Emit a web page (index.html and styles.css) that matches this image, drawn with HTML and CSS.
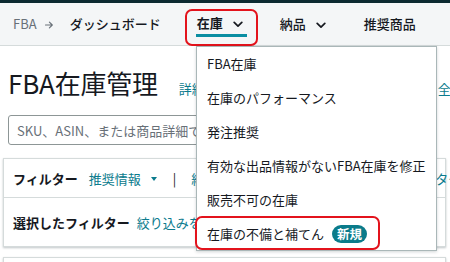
FILE: index.html
```
<!DOCTYPE html>
<html lang="ja">
<head>
<meta charset="utf-8">
<link rel="stylesheet" href="styles.css">
</head>
<body>
<div class="topbar"></div>
<nav class="nav">
  <span class="crumb">FBA</span>
  <svg class="crumb-arrow" width="8" height="8" viewBox="0 0 8 8"><path d="M0.5 4 H7.3 M4.4 1.1 L7.3 4 L4.4 6.9" fill="none" stroke="#687078" stroke-width="1.1" stroke-linecap="round" stroke-linejoin="round"/></svg>
  <span class="nav-link dash">ダッシュボード</span>
  <span class="nav-item active">
    <span class="nav-text">在庫</span>
    <svg class="chev" width="10" height="7" viewBox="0 0 10 7"><path d="M1.2 1.4 L5 5.2 L8.8 1.4" fill="none" stroke="#16191f" stroke-width="1.7" stroke-linecap="round" stroke-linejoin="round"/></svg>
  </span>
  <span class="nav-item plain">
    <span class="nav-text">納品</span>
    <svg class="chev" width="10" height="7" viewBox="0 0 10 7"><path d="M1.2 1.4 L5 5.2 L8.8 1.4" fill="none" stroke="#16191f" stroke-width="1.7" stroke-linecap="round" stroke-linejoin="round"/></svg>
  </span>
  <span class="nav-item plain rec">
    <span class="nav-text">推奨商品</span>
  </span>
</nav>

<main class="page">
  <div class="title-row">
    <h1 class="title">FBA在庫管理</h1>
    <span class="learn link">詳細はこちら</span>
    <span class="all link">全在庫を表示</span>
  </div>

  <div class="search">
    <span class="placeholder">SKU、ASIN、または商品詳細で検索</span>
  </div>

  <section class="card">
    <div class="card-row filter-row">
      <span class="label">フィルター</span>
      <span class="link rec-info">推奨情報</span>
      <span class="caret"></span>
      <span class="pipe">|</span>
      <span class="link narrow">絞り込み</span>
      <span class="link far">ターゲット</span>
    </div>
    <div class="card-row selected-row">
      <span class="label">選択したフィルター</span>
      <span class="link sel">絞り込みを選択してください</span>
    </div>
  </section>

  <section class="card card2">
    <div class="field"></div>
  </section>
</main>

<div class="dropdown">
  <div class="dd-item">FBA在庫</div>
  <div class="dd-item">在庫のパフォーマンス</div>
  <div class="dd-item">発注推奨</div>
  <div class="dd-item">有効な出品情報がないFBA在庫を修正</div>
  <div class="dd-item">販売不可の在庫</div>
  <div class="dd-item marked">在庫の不備と補てん<span class="badge">新規</span></div>
</div>
</body>
</html>
```

FILE: styles.css
```
html, body {
  margin: 0;
  padding: 0;
  width: 450px;
  height: 262px;
  overflow: hidden;
  background: #ffffff;
}
body {
  position: relative;
  font-family: "Noto Sans CJK JP", "Noto Sans", sans-serif;
  font-size: 13px;
  color: #16191f;
  white-space: nowrap;
}

.topbar {
  height: 3px;
  background: #0c2a31;
}

.nav {
  display: flex;
  align-items: center;
  height: 42px;
  padding-left: 13px;
  background: #f4f6f7;
  border-bottom: 1px solid #d5dbdb;
  line-height: 18px;
}
.crumb {
  color: #687078;
  font-size: 13px;
}
.crumb-arrow {
  margin-left: 8px;
  margin-top: 1px;
}
.nav-link.dash {
  margin-left: 17px;
  font-weight: 500;
}
.nav-item {
  display: flex;
  align-items: center;
  gap: 10px;
  font-weight: 500;
}
.nav-item.active {
  position: relative;
  align-self: flex-start;
  margin-top: 8px;
  height: 23px;
  margin-left: 35px;
  padding: 0 4px 0 1px;
  border-bottom: 3px solid #0a8ea2;
  font-weight: 700;
}
.nav-item.active::after {
  content: "";
  position: absolute;
  left: -11px;
  top: -2px;
  width: 69px;
  height: 33px;
  border: 2px solid #e3131c;
  border-radius: 7px;
}
.nav-item.plain {
  margin-left: 33px;
}
.nav-item.rec {
  margin-left: 38px;
}
.chev {
  margin-top: 3px;
}

.title-row {
  display: flex;
  align-items: baseline;
  margin-top: 20px;
  padding-left: 8px;
  height: 34px;
}
.title {
  margin: 0;
  font-size: 26px;
  font-weight: 400;
  line-height: 34px;
  color: #16191f;
  letter-spacing: -0.2px;
}
.link {
  color: #0b7b8d;
}
.learn {
  flex: 0 0 259px;
  margin-left: 21px;
  overflow: hidden;
}

.search {
  display: flex;
  align-items: center;
  box-sizing: border-box;
  margin: 15px 0 0 8px;
  width: 340px;
  height: 30px;
  padding-left: 8px;
  border: 1px solid #8d9696;
  border-radius: 3px;
}
.placeholder {
  color: #687078;
}

.card {
  margin: 13px 4px 0 3px;
  border: 1px solid #d5dbdb;
  box-shadow: 0 1px 2px rgba(0, 28, 36, 0.25);
  background: #fff;
}
.card-row {
  display: flex;
  align-items: center;
  padding-left: 9px;
}
.filter-row {
  height: 38px;
  border-bottom: 1px solid #d5dbdb;
}
.selected-row {
  height: 48px;
}
.label {
  font-weight: 700;
}
.rec-info {
  margin-left: 11px;
}
.caret {
  flex: 0 0 auto;
  width: 0;
  height: 0;
  margin-left: 10px;
  margin-top: 2px;
  border-left: 3.5px solid transparent;
  border-right: 3.5px solid transparent;
  border-top: 4px solid #0b7b8d;
}
.pipe {
  margin-left: 16px;
  color: #16191f;
}
.narrow {
  margin-left: 15px;
  flex: 0 0 244px;
  overflow: hidden;
}
.sel {
  margin-left: 7px;
}
.card2 {
  margin-top: 10px;
  height: 40px;
}
.field {
  margin: 4px 0 0 213px;
  width: 163px;
  height: 20px;
  border: 1px solid #879596;
  border-radius: 2px;
}

.dropdown {
  position: absolute;
  left: 196px;
  top: 46px;
  width: 241px;
  box-sizing: border-box;
  background: #fff;
  border: 1px solid #aab7b8;
  box-shadow: 0 1px 3px rgba(0, 28, 36, 0.18);
}
.dd-item {
  height: 34px;
  line-height: 34px;
  padding-left: 10px;
  display: flex;
  align-items: center;
}
.dd-item.marked {
  position: relative;
  height: 33px;
}
.dd-item.marked::after {
  content: "";
  position: absolute;
  left: -2px;
  top: -1px;
  width: 181px;
  height: 30px;
  border: 2px solid #e3131c;
  border-radius: 7px;
}
.badge {
  display: inline-block;
  margin-left: 8px;
  height: 18px;
  line-height: 18px;
  padding: 0 5px;
  border-radius: 9px;
  background: #0b7b8a;
  color: #fff;
  font-weight: 700;
  font-size: 12.5px;
}
```
